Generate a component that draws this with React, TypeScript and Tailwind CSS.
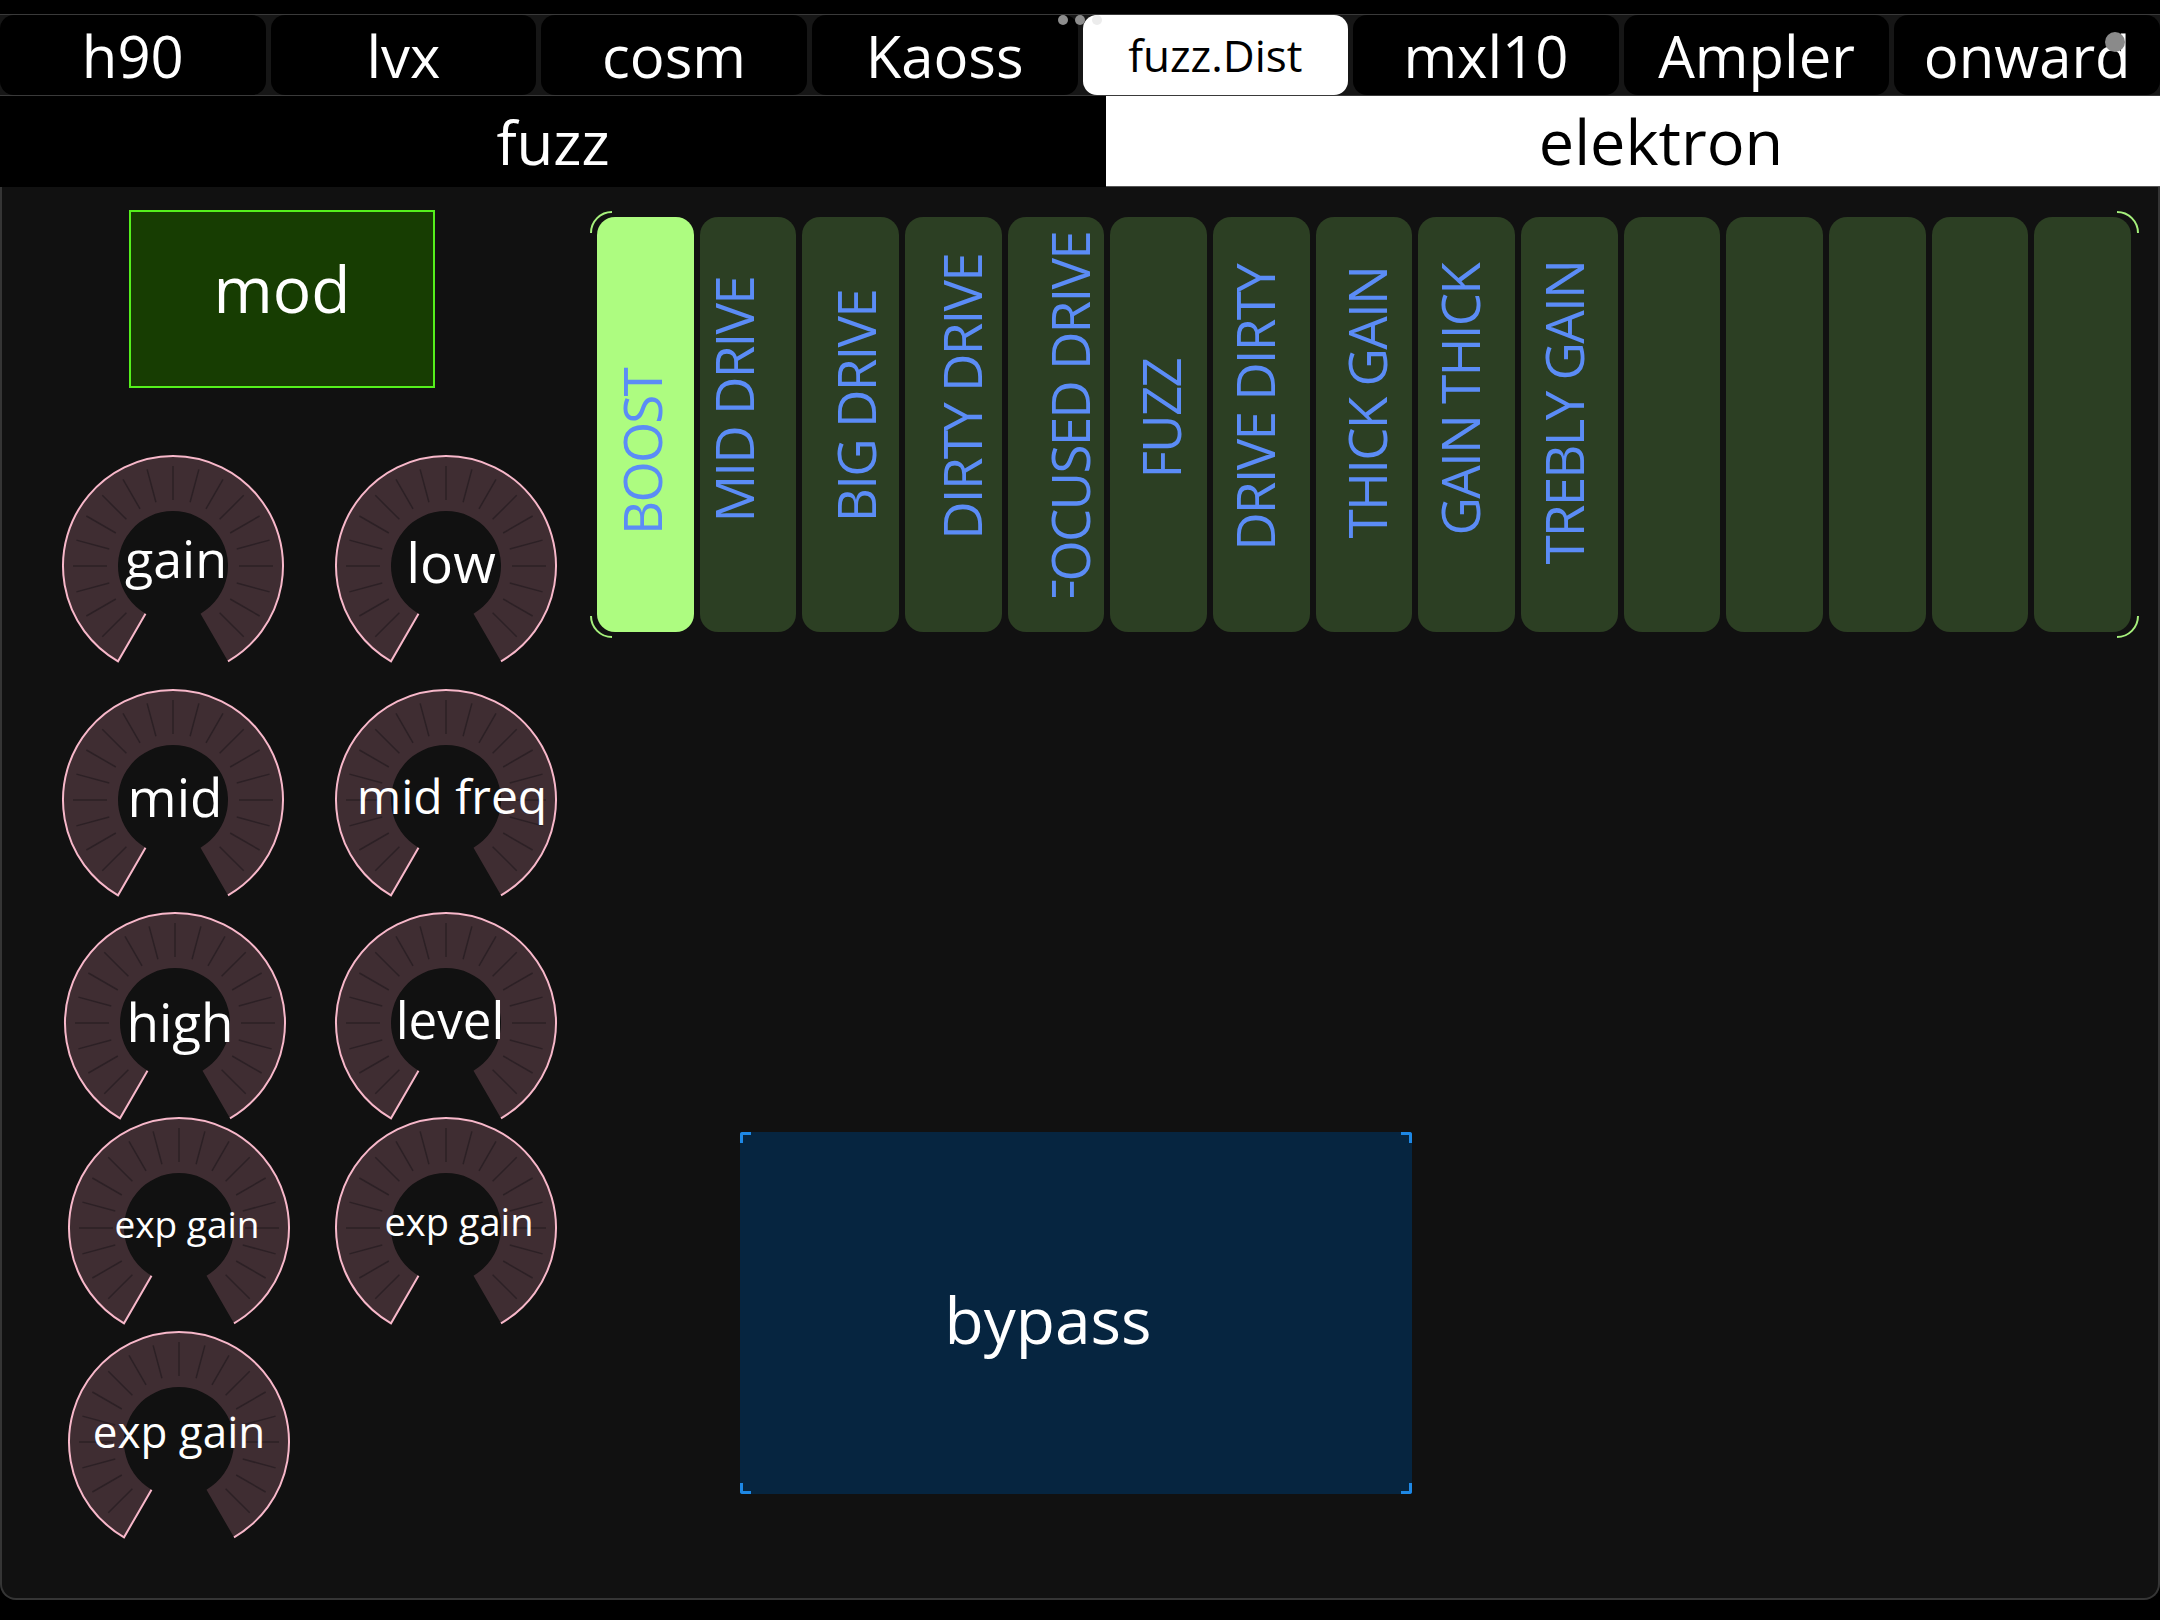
import React from 'react'

const TABS = ['h90', 'lvx', 'cosm', 'Kaoss', 'fuzz.Dist', 'mxl10', 'Ampler', 'onward']
const ACTIVE_TAB = 'fuzz.Dist'

const UI_FONT = "font-['Open_Sans',sans-serif]"

// knob rows: left offset / gap between the two knobs, per-label text size and nudge
const KNOB_ROWS = [
  {
    row: 'h-[234px] ml-[59px] gap-[49px]',
    knobs: [
      { label: 'gain', text: 'text-[52px] translate-x-[3px] -translate-y-[8px]' },
      { label: 'low', text: 'text-[55px] translate-x-[5px] -translate-y-[4px]' },
    ],
  },
  {
    row: 'h-[223px] ml-[59px] gap-[49px]',
    knobs: [
      { label: 'mid', text: 'text-[53px] translate-x-[2px] -translate-y-[3px]' },
      { label: 'mid freq', text: 'text-[48px] translate-x-[6px] -translate-y-[4px]' },
    ],
  },
  {
    row: 'h-[205px] ml-[61px] gap-[47px]',
    knobs: [
      { label: 'high', text: 'text-[53px] translate-x-[5px] -translate-y-[1px]' },
      { label: 'level', text: 'text-[51px] translate-x-[4px] -translate-y-[4px]' },
    ],
  },
  {
    row: 'h-[214px] ml-[65px] gap-[43px]',
    knobs: [
      { label: 'exp gain', text: 'text-[37px] translate-x-[8px] -translate-y-[4px]' },
      { label: 'exp gain', text: 'text-[38px] translate-x-[13px] -translate-y-[7px]' },
    ],
  },
  {
    row: 'h-[224px] ml-[65px] gap-[43px]',
    knobs: [{ label: 'exp gain', text: 'text-[44px] -translate-y-[11px]' }],
  },
]

const PRESETS = [
  { name: 'BOOST', shift: '-translate-x-[4px] translate-y-[27px]' },
  { name: 'MID DRIVE', shift: '-translate-x-[15px] -translate-y-[25px]' },
  { name: 'BIG DRIVE', shift: 'translate-x-[5px] -translate-y-[18px]' },
  { name: 'DIRTY DRIVE', shift: 'translate-x-[8px] -translate-y-[28px]' },
  { name: 'FOCUSED DRIVE', shift: 'translate-x-[13px]', clipped: true },
  { name: 'FUZZ', shift: 'translate-x-[2px] -translate-y-[6px]' },
  { name: 'DRIVE DIRTY', shift: '-translate-x-[7px] -translate-y-[17px]' },
  { name: 'THICK GAIN', shift: 'translate-x-[2px] -translate-y-[22px]' },
  { name: 'GAIN THICK', shift: '-translate-x-[7px] -translate-y-[25px]' },
  { name: 'TREBLY GAIN', shift: '-translate-x-[6px] -translate-y-[12px]' },
  { name: '' },
  { name: '' },
  { name: '' },
  { name: '' },
  { name: '' },
]

function polar(c: number, r: number, deg: number): [number, number] {
  const a = (deg * Math.PI) / 180
  return [c + r * Math.sin(a), c - r * Math.cos(a)]
}

function Knob({ label, text }: { label: string; text: string }) {
  const c = 112
  const R = 110
  const r = 55
  const [olx, oly] = polar(c, R, -150)
  const [orx, ory] = polar(c, R, 150)
  const [ilx, ily] = polar(c, r, -150)
  const [irx, iry] = polar(c, r, 150)
  const ring = `M${olx} ${oly} A${R} ${R} 0 1 1 ${orx} ${ory} L${irx} ${iry} A${r} ${r} 0 1 0 ${ilx} ${ily} Z`
  const edge = `M${ilx} ${ily} L${olx} ${oly} A${R} ${R} 0 1 1 ${orx} ${ory}`
  const ticks = []
  for (let d = -135; d <= 135; d += 15) {
    const [x1, y1] = polar(c, 66, d)
    const [x2, y2] = polar(c, 100, d)
    ticks.push(<line key={d} x1={x1} y1={y1} x2={x2} y2={y2} stroke="#2c2025" strokeWidth="1.5" />)
  }

  return (
    <div className="relative w-[224px] h-[224px] shrink-0">
      <svg width="224" height="224" viewBox="0 0 224 224">
        <path d={ring} fill="#3f2d32" />
        {ticks}
        <path d={edge} fill="none" stroke="#f8b8ca" strokeWidth="2" />
      </svg>
      <div className="absolute inset-0 flex items-center justify-center">
        <span className={`${UI_FONT} text-white whitespace-nowrap ${text}`}>{label}</span>
      </div>
    </div>
  )
}

function PresetTile({ preset, active }: { preset: (typeof PRESETS)[number]; active: boolean }) {
  const label = `${UI_FONT} text-[53px] leading-none tracking-[-1.8px] text-[#5b8cf6] whitespace-nowrap [writing-mode:vertical-rl] rotate-180 shrink-0`
  return (
    <div
      className={`flex-1 min-w-0 rounded-[18px] flex flex-col items-center ${
        preset.clipped ? 'justify-start' : 'justify-center'
      } ${active ? 'bg-[#adfc80]' : 'bg-[#2c3f23]'}`}
    >
      {preset.clipped ? (
        <div className={`mt-[15px] h-[365px] overflow-hidden flex flex-col items-center ${preset.shift}`}>
          <span className={label}>{preset.name}</span>
        </div>
      ) : (
        preset.name && <span className={`${label} ${preset.shift}`}>{preset.name}</span>
      )}
    </div>
  )
}

export default function App() {
  return (
    <div className="relative w-[2160px] h-[1620px] bg-black overflow-hidden">
      <div className="h-[14px]" />

      {/* device tabs */}
      <div className="h-[82px] flex gap-[5px] bg-[#161616] border-t border-b border-[#3a3a3a]">
        {TABS.map((t) => (
          <div
            key={t}
            className={`flex-1 rounded-[14px] flex items-center justify-center ${UI_FONT} ${
              t === ACTIVE_TAB ? 'bg-white text-black text-[44px]' : 'bg-black text-white text-[58px]'
            }`}
          >
            {t}
          </div>
        ))}
      </div>

      {/* page switch */}
      <div className={`h-[91px] flex ${UI_FONT}`}>
        <div className="w-[1106px] bg-black flex items-center justify-center text-white text-[60px]">fuzz</div>
        <div className="flex-1 bg-white border-b border-[#555] flex items-center justify-center pl-[56px] text-black text-[63px]">
          elektron
        </div>
      </div>

      {/* main panel */}
      <div className="h-[1413px] bg-[#111111] border-x-2 border-b-2 border-[#353535] rounded-b-[16px] flex">
        <div className="w-[588px] shrink-0 flex flex-col pt-[23px]">
          <div
            className={`ml-[127px] w-[306px] h-[178px] bg-[#173d02] border-2 border-[#55f01c] flex items-center justify-center pb-[20px] ${UI_FONT} text-white text-[64px]`}
          >
            mod
          </div>
          <div className="mt-[66px] flex flex-col">
            {KNOB_ROWS.map((row, i) => (
              <div key={i} className={`flex shrink-0 ${row.row}`}>
                {row.knobs.map((k, j) => (
                  <Knob key={j} label={k.label} text={k.text} />
                ))}
              </div>
            ))}
          </div>
        </div>

        <div className="flex-1 flex flex-col">
          {/* preset selector */}
          <div className="relative mt-[24px] w-[1549px] h-[427px] flex gap-[6px] pl-[7px] pr-[8px] py-[6px]">
            {PRESETS.map((p, i) => (
              <PresetTile key={i} preset={p} active={i === 0} />
            ))}
            <svg className="absolute inset-0 pointer-events-none" width="1549" height="427" viewBox="0 0 1549 427">
              <g fill="none" stroke="#a6f07c" strokeWidth="2">
                <path d="M1 22 A21 21 0 0 1 22 1" />
                <path d="M1527 1 A21 21 0 0 1 1548 22" />
                <path d="M1548 405 A21 21 0 0 1 1527 426" />
                <path d="M22 426 A21 21 0 0 1 1 405" />
              </g>
            </svg>
          </div>

          {/* bypass */}
          <div
            className={`relative ml-[150px] mt-[494px] w-[672px] h-[362px] bg-[#062540] flex items-center justify-center pt-[14px] pr-[56px] ${UI_FONT} text-white text-[64px]`}
          >
            bypass
            <div className="absolute top-0 left-0 w-[11px] h-[11px] border-t-[3px] border-l-[3px] border-[#1e88e5] rounded-tl-[3px]" />
            <div className="absolute top-0 right-0 w-[11px] h-[11px] border-t-[3px] border-r-[3px] border-[#1e88e5] rounded-tr-[3px]" />
            <div className="absolute bottom-0 left-0 w-[11px] h-[11px] border-b-[3px] border-l-[3px] border-[#1e88e5] rounded-bl-[3px]" />
            <div className="absolute bottom-0 right-0 w-[11px] h-[11px] border-b-[3px] border-r-[3px] border-[#1e88e5] rounded-br-[3px]" />
          </div>
        </div>
      </div>

      {/* window handles */}
      <div className="absolute top-[15px] left-[1058px] flex gap-[7px]">
        <div className="w-[10px] h-[10px] rounded-full bg-[#8e8e8e]" />
        <div className="w-[10px] h-[10px] rounded-full bg-[#8e8e8e]" />
        <div className="w-[10px] h-[10px] rounded-full bg-[#ececec]" />
      </div>
      <div className="absolute top-[32px] left-[2105px] w-[20px] h-[20px] rounded-full bg-[#8a8a8a]" />
    </div>
  )
}
